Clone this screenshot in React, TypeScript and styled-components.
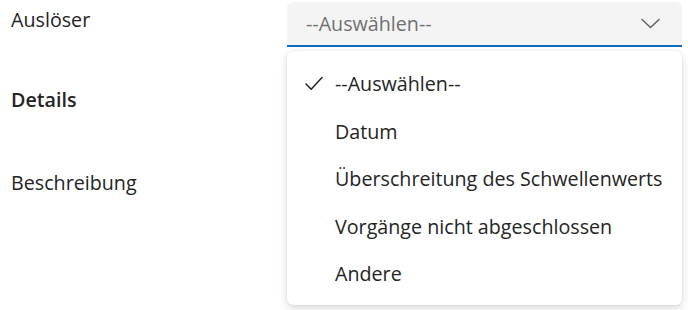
import React from 'react';
import styled, { createGlobalStyle } from 'styled-components';

const GlobalStyle = createGlobalStyle`
  html, body {
    margin: 0;
    padding: 0;
    background: #ffffff;
  }
  body {
    font-family: 'Open Sans', 'Noto Sans', sans-serif;
    color: #242424;
  }
`;

const Form = styled.div`
  width: 688px;
  height: 310px;
  padding: 2px 6px 0 11px;
  box-sizing: border-box;
  display: flex;
  flex-direction: column;
  overflow: hidden;
`;

const FieldRow = styled.div`
  display: grid;
  grid-template-columns: 276px 1fr;
  align-items: start;
`;

const Label = styled.div<{ $bold?: boolean; $pad?: number }>`
  font-size: 19.7px;
  line-height: 26px;
  padding-top: ${p => p.$pad ?? 0}px;
  font-weight: ${p => (p.$bold ? 600 : 400)};
  color: #242424;
`;

const Section = styled.div<{ $top: number }>`
  margin-top: ${p => p.$top}px;
`;

const DropdownWrap = styled.div`
  position: relative;
`;

const Trigger = styled.button`
  width: 100%;
  height: 45px;
  display: flex;
  align-items: center;
  justify-content: space-between;
  padding: 0 22px 0 19px;
  box-sizing: border-box;
  border: none;
  border-radius: 6px 6px 0 0;
  border-bottom: 2px solid #0f6cbd;
  background: #f4f4f4;
  font-family: inherit;
  font-size: 19.7px;
  color: #707070;
  cursor: pointer;
`;

const Menu = styled.ul`
  position: absolute;
  top: 49px;
  left: 0;
  right: 0;
  margin: 0;
  padding: 9px 0 7px;
  list-style: none;
  background: #ffffff;
  border-radius: 6px;
  box-shadow: 0 0 2px rgba(0, 0, 0, 0.12), 0 4px 10px rgba(0, 0, 0, 0.14);
  z-index: 2;
`;

const Option = styled.li`
  height: 47.5px;
  display: flex;
  align-items: center;
  padding-left: 18px;
  font-size: 19.7px;
  color: #242424;
`;

const Check = styled.span`
  width: 30px;
  display: flex;
  align-items: center;
`;

const options = [
  '--Auswählen--',
  'Datum',
  'Überschreitung des Schwellenwerts',
  'Vorgänge nicht abgeschlossen',
  'Andere'
];

const Chevron = () => (
  <svg width="19" height="11" viewBox="0 0 19 11" fill="none">
    <path d="M1 1.5 L9.5 9.5 L18 1.5" stroke="#616161" strokeWidth="1.5" strokeLinecap="round" strokeLinejoin="round" />
  </svg>
);

const CheckIcon = () => (
  <svg width="18" height="15" viewBox="0 0 18 15" fill="none">
    <path d="M1 8 L6.2 13.2 L17 1.5" stroke="#242424" strokeWidth="1.5" strokeLinecap="round" strokeLinejoin="round" />
  </svg>
);

const App: React.FC = () => {
  const selected = options[0];
  return (
    <>
      <GlobalStyle />
      <Form>
        <FieldRow>
          <Label $pad={5}>Auslöser</Label>
          <DropdownWrap>
            <Trigger>
              <span>--Auswählen--</span>
              <Chevron />
            </Trigger>
            <Menu>
              {options.map(o => (
                <Option key={o}>
                  <Check>{o === selected && <CheckIcon />}</Check>
                  {o}
                </Option>
              ))}
            </Menu>
          </DropdownWrap>
        </FieldRow>
        <Section $top={40}>
          <Label $bold>Details</Label>
        </Section>
        <Section $top={57}>
          <Label>Beschreibung</Label>
        </Section>
      </Form>
    </>
  );
};

export default App;
